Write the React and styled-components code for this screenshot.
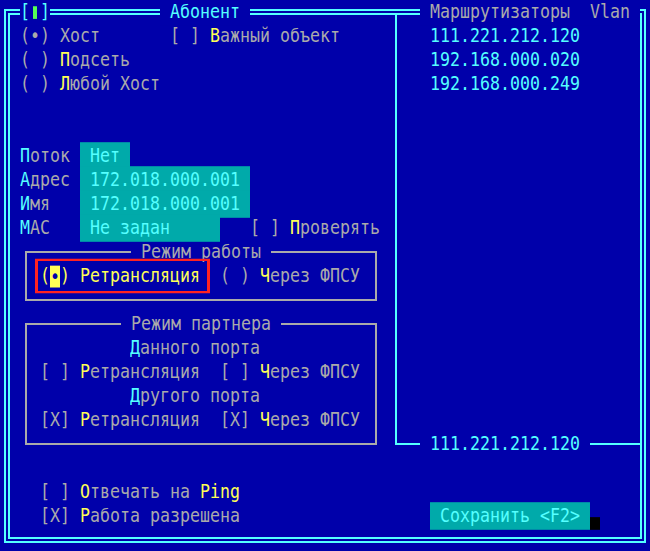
import React from 'react';
import styled, { createGlobalStyle } from 'styled-components';

// DOS text-mode palette
const C = {
  bg: '#0000aa',
  cyan: '#55ffff',
  grey: '#aaaaaa',
  yellow: '#ffff55',
  teal: '#00aaaa',
  green: '#55ff55',
  red: '#ff2222',
};

// the VGA font is taller than DejaVu at this width
const TALL = 'scaleY(1.15)';

const Global = createGlobalStyle`
  html, body { margin: 0; padding: 0; background: ${C.bg}; }
  body { width: 650px; height: 551px; overflow: hidden; }
`;

const Screen = styled.div`
  position: relative;
  width: 650px;
  height: 551px;
  box-sizing: border-box;
  padding: 9px 4px 8px 4px;
  background: ${C.bg};
  color: ${C.grey};
  font-family: "DejaVu Sans Mono", "Liberation Mono", monospace;
  font-size: 16.61px;
  line-height: 24px;
  white-space: pre;
`;

const Frame = styled.div`
  height: 100%;
  box-sizing: border-box;
  border: 6px double ${C.cyan};
  display: grid;
  grid-template-rows: 441px 1fr;
`;

// titles sitting on the top border
const Title = styled.div`
  position: absolute;
  top: 0;
  left: ${(p) => p.$col * 10}px;
  height: 24px;
  background: ${C.bg};
  color: ${(p) => p.$color || C.grey};
  display: flex;
  align-items: center;
  transform: ${TALL};
`;

const Led = styled.span`
  display: inline-block;
  width: 4px;
  height: 11px;
  margin: 0 3px;
  background: ${C.green};
`;

const Upper = styled.div`
  display: grid;
  grid-template-columns: 385px 1fr;
`;

const LeftPane = styled.div`
  padding: 9px 0 0 10px;
`;

const RightPane = styled.div`
  display: flex;
  flex-direction: column;
`;

const List = styled.div`
  flex: 1;
  border-left: 2px solid ${C.cyan};
  padding: 9px 0 0 33px;
  color: ${C.cyan};
`;

const Rule = styled.div`
  display: flex;
  height: 24px;
  color: ${C.cyan};
`;

const Seg = styled.div`
  box-sizing: border-box;
  height: 13px;
  width: ${(p) => (p.$w ? `${p.$w}px` : 'auto')};
  flex: ${(p) => (p.$w ? 'none' : 1)};
  border-bottom: 2px solid ${C.cyan};
  border-left: ${(p) => (p.$corner ? `2px solid ${C.cyan}` : 'none')};
`;

const RuleLabel = styled.span`
  padding: 0 10px;
  transform: ${TALL};
`;

const Row = styled.div`
  display: flex;
  height: 24px;
  padding-left: ${(p) => (p.$indent || 0) * 10}px;
  color: ${(p) => p.$color || 'inherit'};
  transform: ${TALL};
`;

const Item = styled.span`
  position: relative;
  display: flex;
  align-items: center;
  width: ${(p) => (p.$w ? `${p.$w * 10}px` : 'auto')};
  margin-left: ${(p) => (p.$ml || 0) * 10}px;
  color: ${(p) => (p.$active ? C.yellow : 'inherit')};

  &::after {
    content: '';
    display: ${(p) => (p.$focus ? 'block' : 'none')};
    position: absolute;
    left: -5px;
    right: -10px;
    top: -3px;
    bottom: -3px;
    border: 3px solid ${C.red};
    border-width: 2.6px 3px;
  }
`;

const Hot = styled.span`
  color: ${C.yellow};
`;

const Key = styled.span`
  color: ${C.cyan};
`;

const Cursor = styled.span`
  display: inline-block;
  width: 10px;
  height: 19px;
  line-height: 19px;
  background: ${C.yellow};
  color: ${C.bg};
  text-align: center;
`;

const Label = styled.span`
  width: 60px;
`;

const Field = styled.span`
  box-sizing: border-box;
  width: ${(p) => p.$w * 10}px;
  height: 24px;
  padding-left: 10px;
  background: ${C.teal};
  color: ${C.cyan};
`;

const Group = styled.fieldset`
  box-sizing: border-box;
  width: 352px;
  min-width: 0;
  margin: 0 0 11px 5px;
  padding: 0 0 11px 0;
  border: 2px solid ${C.grey};
`;

const Caption = styled.legend`
  margin: 0 auto;
  padding: 0 10px;
  height: 24px;
  line-height: 24px;
  color: ${C.grey};
  transform: ${TALL};
`;

const GroupBody = styled.div`
  padding-left: 13px;
`;

const Bottom = styled.div`
  padding: 24px 0 9px 30px;
`;

const Button = styled.span`
  display: flex;
`;

const ButtonFace = styled.span`
  padding: 0 10px;
  background: ${C.teal};
  color: ${C.cyan};
`;

const Shadow = styled.span`
  align-self: flex-end;
  width: 10px;
  height: 11px;
  background: #000;
`;

const routers = ['111.221.212.120', '192.168.000.020', '192.168.000.249'];

const App = () => {
  return (
    <Screen>
      <Global />
      <Frame>
        <Upper>
          <LeftPane>
            <Row>
              <Item $w={15}>(•) Хост</Item>
              <Item>[ ] <Hot>В</Hot>ажный объект</Item>
            </Row>
            <Row>
              <Item>( ) <Hot>П</Hot>одсеть</Item>
            </Row>
            <Row>
              <Item>( ) <Hot>Л</Hot>юбой Хост</Item>
            </Row>
            <Row />
            <Row />
            <Row>
              <Label><Key>П</Key>оток</Label>
              <Field $w={5}>Нет</Field>
            </Row>
            <Row>
              <Label><Key>А</Key>дрес</Label>
              <Field $w={17}>172.018.000.001</Field>
            </Row>
            <Row>
              <Label><Key>И</Key>мя</Label>
              <Field $w={17}>172.018.000.001</Field>
            </Row>
            <Row>
              <Label><Key>М</Key>АС</Label>
              <Field $w={14}>Не задан</Field>
              <Item $ml={3}>[ ] <Hot>П</Hot>роверять</Item>
            </Row>

            <Group>
              <Caption>Режим работы</Caption>
              <GroupBody>
                <Row>
                  <Item $w={16} $active $focus>
                    (<Cursor>•</Cursor>) Ретрансляция
                  </Item>
                  <Item $ml={2}>( ) <Hot>Ч</Hot>ерез ФПСУ</Item>
                </Row>
              </GroupBody>
            </Group>

            <Group>
              <Caption>Режим партнера</Caption>
              <GroupBody>
                <Row $indent={9}><Key>Д</Key>анного порта</Row>
                <Row>
                  <Item $w={16}>[ ] <Hot>Р</Hot>етрансляция</Item>
                  <Item $ml={2}>[ ] <Hot>Ч</Hot>ерез ФПСУ</Item>
                </Row>
                <Row $indent={9}><Key>Д</Key>ругого порта</Row>
                <Row>
                  <Item $w={16}>[X] <Hot>Р</Hot>етрансляция</Item>
                  <Item $ml={2}>[X] <Hot>Ч</Hot>ерез ФПСУ</Item>
                </Row>
              </GroupBody>
            </Group>
          </LeftPane>

          <RightPane>
            <List>
              {routers.map((ip) => (
                <Row key={ip}>{ip}</Row>
              ))}
            </List>
            <Rule>
              <Seg $w={25} $corner />
              <RuleLabel>111.221.212.120</RuleLabel>
              <Seg />
            </Rule>
          </RightPane>
        </Upper>

        <Bottom>
          <Row>
            <Item>[ ] <Hot>О</Hot>твечать на <Hot>Ping</Hot></Item>
          </Row>
          <Row>
            <Item $w={39}>[X] <Hot>Р</Hot>абота разрешена</Item>
            <Button>
              <ButtonFace>Сохранить &lt;F2&gt;</ButtonFace>
              <Shadow />
            </Button>
          </Row>
        </Bottom>
      </Frame>

      <Title $col={2} $color={C.cyan}>[<Led />]</Title>
      <Title $col={16} $color={C.cyan}> Абонент </Title>
      <Title $col={42}> Маршрутизаторы  Vlan </Title>
    </Screen>
  );
};

export default App;
